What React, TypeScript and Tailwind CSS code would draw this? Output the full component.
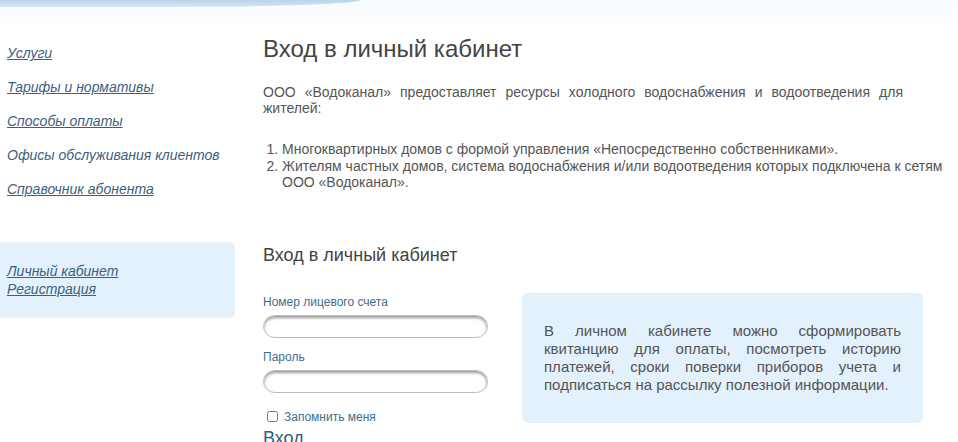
import React from "react";

const links = [
  { label: "Услуги", underline: true },
  { label: "Тарифы и нормативы", underline: true },
  { label: "Способы оплаты", underline: true },
  { label: "Офисы обслуживания клиентов", underline: false },
  { label: "Справочник абонента", underline: true },
];

export default function App() {
  return (
    <div className="w-[958px] h-[442px] overflow-hidden bg-white font-['Liberation_Sans',Arial,sans-serif] text-[#444]">
      {/* top decorative band */}
      <div className="h-[26px] bg-gradient-to-b from-[#f7faff] to-white">
        <div className="h-[7px] w-[360px] rounded-br-[200px_7px] bg-gradient-to-b from-[#b9d3ec] to-[#d6e6f6]" />
      </div>

      <div className="flex">
        {/* sidebar */}
        <aside className="w-[235px] shrink-0">
          <nav className="flex flex-col gap-[18px] pl-[7px] pt-[19px]">
            {links.map((l) => (
              <a
                key={l.label}
                href="#"
                className={
                  "text-[14px] leading-[16px] italic text-[#3d5f80] " +
                  (l.underline ? "underline" : "no-underline")
                }
              >
                {l.label}
              </a>
            ))}
          </nav>
          <div className="mt-[45px] h-[76px] rounded-r-[6px] bg-[#e2f1fc] pl-[7px] pt-[20px]">
            <a href="#" className="block text-[14px] leading-[18px] italic text-[#3d5f80] underline">
              Личный кабинет
            </a>
            <a href="#" className="block text-[14px] leading-[18px] italic text-[#3d5f80] underline">
              Регистрация
            </a>
          </div>
        </aside>

        {/* main */}
        <main className="pl-[28px] pr-[6px]">
          <h1 className="text-[24px] leading-[28px] text-[#444] pt-[9px]">Вход в личный кабинет</h1>
          <p className="mt-[21px] w-[640px] text-justify text-[14px] leading-[16px] text-[#555]">
            ООО «Водоканал» предоставляет ресурсы холодного водоснабжения и водоотведения для жителей:
          </p>
          <ol className="mt-[25px] list-decimal pl-[19px] text-[14px] leading-[16.5px] text-[#555]">
            <li>Многоквартирных домов с формой управления «Непосредственно собственниками».</li>
            <li>
              Жителям частных домов, система водоснабжения и/или водоотведения которых подключена к сетям ООО «Водоканал».
            </li>
          </ol>

          <h2 className="mt-[54px] text-[18px] leading-[20px] text-[#444]">Вход в личный кабинет</h2>

          <div className="flex gap-[34px]">
            <form className="w-[225px] shrink-0 pt-[30px]">
              <label className="block text-[12px] leading-[14px] text-[#3e6d8e]">Номер лицевого счета</label>
              <input
                type="text"
                className="mt-[6px] block h-[23px] w-[225px] rounded-full border border-[#bdbdbd] bg-white shadow-[inset_0_2px_3px_rgba(0,0,0,0.4)] outline-none"
              />
              <label className="mt-[12px] block text-[12px] leading-[14px] text-[#3e6d8e]">Пароль</label>
              <input
                type="password"
                className="mt-[6px] block h-[23px] w-[225px] rounded-full border border-[#bdbdbd] bg-white shadow-[inset_0_2px_3px_rgba(0,0,0,0.4)] outline-none"
              />
              <label className="mt-[17px] flex items-center gap-[6px] pl-[4px] text-[12px] leading-[14px] text-[#3e6d8e]">
                <input type="checkbox" className="h-[11px] w-[11px] accent-[#cfcfcf]" />
                Запомнить меня
              </label>
              <button type="submit" className="mt-[4px] text-[18px] leading-[20px] text-[#2f5f82]">
                Вход
              </button>
            </form>

            <div className="mt-[28px] h-[130px] w-[401px] rounded-[6px] bg-[#e2f1fc] px-[22px] pt-[29px]">
              <p className="text-justify text-[15px] leading-[18px] text-[#555]">
                В личном кабинете можно сформировать квитанцию для оплаты, посмотреть историю платежей, сроки поверки приборов учета и подписаться на рассылку полезной информации.
              </p>
            </div>
          </div>
        </main>
      </div>
    </div>
  );
}
